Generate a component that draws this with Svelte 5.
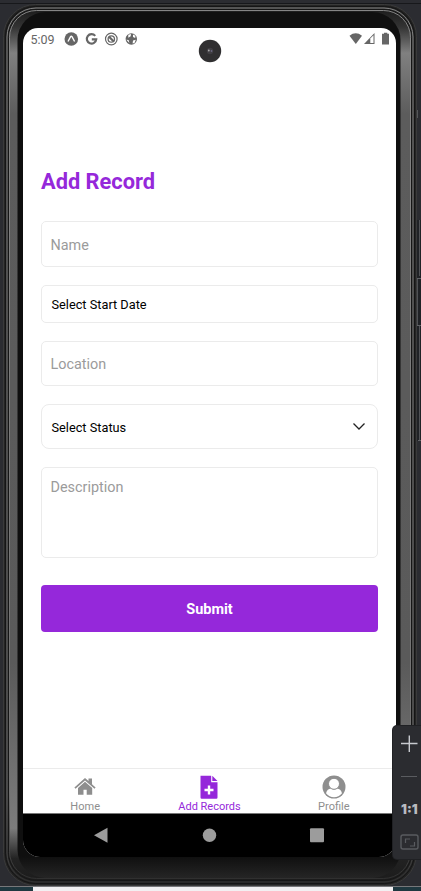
<script>
  const fields = [
    { kind: 'input', text: 'Name', height: 46, gap: 18 },
    { kind: 'picker', text: 'Select Start Date', height: 37.5, gap: 18 },
    { kind: 'input', text: 'Location', height: 45.5, gap: 18 },
    { kind: 'picker select', text: 'Select Status', height: 45, gap: 18 },
    { kind: 'input area', text: 'Description', height: 91, gap: 27 }
  ];
</script>

<div class="desk">
  <svg class="frame" width="421" height="891" viewBox="0 0 421 891" fill="none">
    <defs>
      <linearGradient id="metal" x1="0" y1="0" x2="0" y2="1">
        <stop offset="0" stop-color="#1c1c1c" /><stop offset=".02" stop-color="#333" />
        <stop offset=".05" stop-color="#808080" /><stop offset=".12" stop-color="#5c5c5c" />
        <stop offset=".75" stop-color="#5a5a5a" /><stop offset=".94" stop-color="#7c7c7c" />
        <stop offset=".975" stop-color="#222" /><stop offset="1" stop-color="#1c1c1c" />
      </linearGradient>
      <linearGradient id="ring" x1="0" y1="0" x2="0" y2="1">
        <stop offset="0" stop-color="#858585" /><stop offset=".9" stop-color="#707070" />
        <stop offset="1" stop-color="#303030" />
      </linearGradient>
      <linearGradient id="chin" x1="0" y1="0" x2="0" y2="1">
        <stop offset="0" stop-color="#0f0f0f" /><stop offset=".975" stop-color="#0f0f0f" />
        <stop offset="1" stop-color="#252525" />
      </linearGradient>
    </defs>
    <path d="M0 3.500H421" stroke="#17181b" />
    <rect x="0" y="886" width="421" height="5" fill="#1f3840" />
    <rect x="33" y="886" width="360" height="5" fill="#f2f0f2" />
    <path d="M0 886.500H421" stroke="#77777a" />
    <path d="M417 220h4v221h-4z" fill="#202226" />
    <path d="M419.500 220v56M417.500 278v47M419.500 326v115" stroke="#505256" />
    <path d="M417 278.500h4M417 325.500h4M418 440.500h3" stroke="#606266" />
    <path d="M3.500 110v10M417.500 110v8" stroke="#55575a" />
    <rect x="3.500" y="4.500" width="413" height="881" rx="32" fill="#242424" stroke="#3a3a3a" />
    <rect x="5.500" y="6.500" width="409" height="877" rx="30" stroke="#151515" />
    <rect x="7" y="8" width="406" height="874" rx="29" stroke="url(#ring)" />
    <rect x="8.500" y="9.500" width="403" height="871" rx="28" fill="url(#metal)" stroke="#161616" />
    <rect x="9.500" y="10.500" width="401" height="868" rx="27" stroke="url(#ring)" />
    <rect x="17.500" y="12" width="383" height="866" rx="28" fill="url(#chin)" />
  </svg>

  <div class="screen">
    <header>
      <span class="clock">5:09</span>
      <svg class="notices" width="76" height="16" viewBox="0 0 76 16">
        <circle cx="7.300" cy="8" r="6.800" fill="#666" />
        <path d="M4 10.500 6.600 5.700q.7-1 1.400 0l2.600 4.800" fill="none" stroke="#fff" stroke-width="1.400" />
        <path d="M31.200 4.900A4.700 4.700 0 1 0 32.200 8.300H27.800" fill="none" stroke="#666" stroke-width="2.200" />
        <circle cx="47.300" cy="8" r="5.800" fill="none" stroke="#666" stroke-width="1.200" />
        <circle cx="47.300" cy="8" r="3.200" fill="none" stroke="#666" stroke-width="1.300" />
        <path d="m45.300 6 4.500 4.500" stroke="#666" stroke-width="2.200" />
        <circle cx="67.300" cy="8" r="5.700" fill="#666" />
        <path d="m64.300 3.800 2.700-.8-.3 2.300-2.400 1.400zM69 3.500l2.400 1.200-.2 2.200-2.200-1zM62.300 8.800l2.300.3.8 3zM69 9.500l2.800-.8-1.300 3.400-1.900.3z" fill="#fff" />
      </svg>
      <svg class="signals" width="41" height="14" viewBox="0 0 41 14">
        <path d="M.5 3.700q6.200-4.800 12.500 0L6.800 12z" fill="#666" />
        <path d="M15 12 25.500 1v11z" fill="#666" /><path d="M21.300 6.500 24.500 3.200v7.800h-3.200z" fill="#fff" />
        <path d="M33 1.800h2V.8h3.300v1H40v10.700h-7z" fill="#666" />
      </svg>
    </header>

    <main>
      <h1>Add Record</h1>
      {#each fields as f}
        <div class="field {f.kind}" style:height="{f.height}px" style:margin-bottom="{f.gap}px">
          <span>{f.text}</span>
          {#if f.kind.includes('select')}
            <svg width="14" height="9" viewBox="0 0 14 9"><path d="M1.500 1.500 7 7l5.500-5.500" fill="none" stroke="#222" stroke-width="1.300" /></svg>
          {/if}
        </div>
      {/each}
      <button>Submit</button>
    </main>

    <nav class="tabs">
      <div class="tab">
        <svg width="22" height="24" viewBox="0 0 22 24">
          <path d="M11 3 14.500 6.100V3.600H18v5.600l3.600 3.200-1.100 1.300L11 5.500l-9.500 8.200-1.100-1.300z" fill="#8e8e8e" />
          <path d="m11 6.700 7.200 6.300v6.800h-5.500v-5H9.500v5H4V13z" fill="#8e8e8e" />
        </svg>
        <span>Home</span>
      </div>
      <div class="tab active">
        <svg width="18" height="24" viewBox="0 0 18 24">
          <path d="M.5.8h10.700v6.500h6.300v15.200q0 1.200-1.200 1.200H1.700Q.5 23.700.5 22.500zM12.300.8l5.200 5.300h-5.200z" fill="#9528da" />
          <path d="M9 10.500v9M4.500 15h9" stroke="#fff" stroke-width="2.400" />
        </svg>
        <span>Add Records</span>
      </div>
      <div class="tab">
        <svg width="24" height="24" viewBox="0 0 24 24">
          <circle cx="12" cy="12" r="11.500" fill="#8e8e8e" />
          <path d="M4 18.200q1.200-4.500 5-4.800 3 2 6 0 3.800.3 5 4.800-3.300 4-8 4t-8-4z" fill="#fff" />
          <circle cx="12" cy="8.800" r="5.500" fill="#fff" stroke="#8e8e8e" stroke-width="1" />
        </svg>
        <span>Profile</span>
      </div>
    </nav>

    <footer>
      <svg width="373" height="43" viewBox="0 0 373 43" fill="#9c9c9c">
        <path d="M71 21.300 84.500 13.800v15z" />
        <circle cx="186.500" cy="21.300" r="6.700" /><rect x="287" y="14.300" width="14" height="14" rx="1" />
      </svg>
    </footer>
  </div>

  <svg class="camera" width="24" height="24" viewBox="0 0 24 24">
    <circle cx="12" cy="12" r="11.200" fill="#302f31" />
    <circle cx="12" cy="12" r="3.200" fill="#403e43" /><circle cx="10.800" cy="11.500" r=".9" fill="#aaa" /><circle cx="13.500" cy="12" r=".9" fill="#686580" />
  </svg>

  <aside>
    <svg width="28" height="133" viewBox="0 0 28 133" fill="none">
      <path d="M8 17.500h16.500M16.300 9.500v16.500" stroke="#c8cacf" stroke-width="1.400" />
      <path d="M8 50.500h16" stroke="#5a5c60" />
      <rect x="8" y="109" width="17" height="14" rx="2" stroke="#595b5f" stroke-width="1.400" />
      <path d="M12.500 117v-4H17M17 120h4.500v-4" stroke="#595b5f" stroke-width="1.200" />
    </svg>
    <span>1:1</span>
  </aside>
</div>

<style>
  .desk { position: relative; width: 421px; height: 891px; box-sizing: border-box; padding: 28px 25px 34px 23px; overflow: hidden; background: #2b2c31; font-family: Roboto, sans-serif; }
  .frame { position: absolute; left: 0; top: 0; }
  .screen { position: relative; width: 373px; height: 829px; display: flex; flex-direction: column; overflow: hidden; background: #fff; border-radius: 15px 15px 17px 17px; }
  header { height: 22px; display: flex; align-items: center; color: #666; }
  .clock { width: 33px; padding-left: 7.500px; font-size: 12.500px; }
  .notices { margin-right: auto; }
  .signals { margin-right: 6px; }
  main { flex: 1; padding: 114px 18px 0; display: flex; flex-direction: column; }
  h1 { margin: 0 0 20px; height: 37px; line-height: 35px; font-size: 21.800px; font-weight: 700; color: #9528da; white-space: nowrap; }
  .field { flex: none; box-sizing: border-box; border: 1px solid #ebebeb; border-radius: 5px; padding: 0 11px 0 8.500px; display: flex; align-items: center; justify-content: space-between; font-size: 14.400px; color: #9b9b9b; }
  .picker { padding-left: 9.500px; font-size: 12.750px; color: #000; }
  .picker span { padding-top: 1.500px; }
  .select { border-radius: 8px; }
  .input span { padding-top: 2.500px; }
  .area { align-items: flex-start; padding-top: 8.500px; }
  button { flex: none; height: 47px; padding: 2px 0 0; border: 0; border-radius: 4px; background: #9528da; color: #fff; font: 700 14.500px Roboto, sans-serif; }
  .tabs { flex: none; height: 46px; box-sizing: border-box; border-top: 1px solid #ebebeb; display: grid; grid-template-columns: repeat(3, 1fr); }
  .tab { display: flex; flex-direction: column; align-items: center; padding-top: 6px; color: #8e8e8e; font-size: 11px; line-height: 16px; }
  .tab svg { flex: none; }
  .active { color: #9528da; }
  footer { flex: none; height: 43px; background: #000; box-shadow: 0 -1px #777; position: relative; }
  footer svg { display: block; }
  .camera { position: absolute; left: 198px; top: 39px; }
  aside { position: absolute; left: 393px; top: 726px; width: 32px; height: 133px; background: #2b2c30; border-radius: 4px; box-shadow: 0 0 0 1px #202124; }
  aside svg { display: block; }
  aside span { position: absolute; left: 8px; top: 75px; font: 900 13px/16px Inter, sans-serif; color: #b9bbc0; }
</style>
